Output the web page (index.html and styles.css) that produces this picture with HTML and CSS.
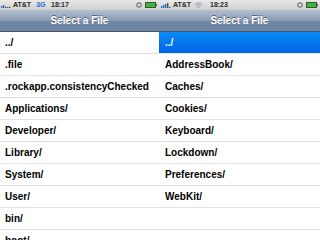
FILE: index.html
```html
<!DOCTYPE html>
<html>
<head>
<meta charset="utf-8">
<link rel="stylesheet" href="styles.css">
</head>
<body>
<div class="screens">
  <section class="phone left">
    <div class="status">
      <div class="carrier">
        <svg class="signal" width="10" height="6" viewBox="0 0 10 6"><rect x="0" y="4" width="1.4" height="2" fill="#1f6fd0"/><rect x="2" y="3" width="1.4" height="3" fill="#1f6fd0"/><rect x="4" y="4.8" width="1.4" height="1.2" fill="#555"/><rect x="6" y="4.8" width="1.4" height="1.2" fill="#555"/><rect x="8" y="4.8" width="1.4" height="1.2" fill="#555"/></svg>
        <span class="att">AT&amp;T</span>
        <span class="net">3G</span>
      </div>
      <span class="time">18:17</span>
      <div class="sys">
        <svg width="6" height="6" viewBox="0 0 6 6"><circle cx="3" cy="3" r="2.2" fill="none" stroke="#777" stroke-width="1.2"/></svg>
        <svg width="12" height="6" viewBox="0 0 12 6"><rect x="0.5" y="0.5" width="10" height="5" fill="#2fbf2f" stroke="#4a4a4a" stroke-width="1"/><rect x="10.5" y="1.8" width="1.3" height="2.4" fill="#4a4a4a"/></svg>
      </div>
    </div>
    <div class="nav">Select a File</div>
    <ul class="list">
      <li>../</li>
      <li>.file</li>
      <li>.rockapp.consistencyChecked</li>
      <li>Applications/</li>
      <li>Developer/</li>
      <li>Library/</li>
      <li>System/</li>
      <li>User/</li>
      <li>bin/</li>
      <li>boot/</li>
    </ul>
  </section>
  <section class="phone right">
    <div class="status">
      <div class="carrier">
        <svg class="signal" width="10" height="6" viewBox="0 0 10 6"><rect x="0" y="4" width="1.4" height="2" fill="#1f6fd0"/><rect x="2" y="3" width="1.4" height="3" fill="#1f6fd0"/><rect x="4" y="2" width="1.4" height="4" fill="#1f6fd0"/><rect x="6" y="1" width="1.4" height="5" fill="#555"/><rect x="8" y="4.8" width="1.4" height="1.2" fill="#555"/></svg>
        <span class="att">AT&amp;T</span>
        <svg class="wifi" width="9" height="7" viewBox="0 0 9 7"><path d="M0.6 2.6 A5.5 5.5 0 0 1 8.4 2.6" fill="none" stroke="#8a99b0" stroke-width="1"/><path d="M2 4 A3.5 3.5 0 0 1 7 4" fill="none" stroke="#8a99b0" stroke-width="1"/><path d="M3.4 5.4 A1.6 1.6 0 0 1 5.6 5.4" fill="none" stroke="#8a99b0" stroke-width="1"/></svg>
      </div>
      <span class="time">18:23</span>
      <div class="sys">
        <svg width="6" height="6" viewBox="0 0 6 6"><circle cx="3" cy="3" r="2.2" fill="none" stroke="#777" stroke-width="1.2"/></svg>
        <svg width="12" height="6" viewBox="0 0 12 6"><rect x="0.5" y="0.5" width="10" height="5" fill="#2fbf2f" stroke="#4a4a4a" stroke-width="1"/><rect x="10.5" y="1.8" width="1.3" height="2.4" fill="#4a4a4a"/></svg>
      </div>
    </div>
    <div class="nav">Select a File</div>
    <ul class="list">
      <li class="sel">../</li>
      <li>AddressBook/</li>
      <li>Caches/</li>
      <li>Cookies/</li>
      <li>Keyboard/</li>
      <li>Lockdown/</li>
      <li>Preferences/</li>
      <li>WebKit/</li>
      <li></li>
      <li></li>
    </ul>
  </section>
</div>
</body>
</html>
```
FILE: styles.css
```css
html, body {
  margin: 0;
  padding: 0;
  width: 320px;
  height: 240px;
  overflow: hidden;
  background: #fff;
  font-family: "Liberation Sans", Arial, sans-serif;
}
.screens {
  display: grid;
  grid-template-columns: 159px 161px;
  width: 320px;
  height: 240px;
  overflow: hidden;
}
.phone {
  display: flex;
  flex-direction: column;
  overflow: hidden;
}
.status {
  height: 10px;
  display: flex;
  align-items: center;
  background: linear-gradient(#e9e9e9, #cfcfcf);
  font-size: 7px;
  font-weight: bold;
  color: #2a2a2a;
  line-height: 10px;
}
.carrier {
  display: flex;
  align-items: center;
  width: 50px;
  padding-left: 1px;
  box-sizing: border-box;
}
.right .carrier {
  padding-left: 2px;
}
.signal {
  margin-right: 2px;
}
.net {
  margin-left: 5px;
  color: #2470d4;
}
.wifi {
  margin-left: 3px;
}
.time {
  margin-left: 1px;
}
.right .time {
  margin-left: 1px;
}
.sys {
  margin-left: auto;
  display: flex;
  align-items: center;
  gap: 3px;
  padding-right: 2px;
}
.right .sys {
  padding-right: 2px;
}
.nav {
  height: 21px;
  border-bottom: 1px solid #4a5566;
  background: linear-gradient(#b3bfcf, #8a9db6 50%, #7087a5 51%, #6d84a2);
  color: #fff;
  font-weight: bold;
  font-size: 10px;
  text-align: center;
  line-height: 21px;
  text-shadow: 0 -1px 0 rgba(0,0,0,0.45);
}
.list {
  list-style: none;
  margin: 0;
  padding: 0;
}
.list li {
  height: 21px;
  line-height: 21px;
  border-bottom: 1px solid #e2e2e2;
  padding-left: 5px;
  font-size: 10px;
  font-weight: bold;
  color: #000;
  white-space: nowrap;
}
.right .list li {
  padding-left: 6px;
}
.list li.sel {
  background: linear-gradient(#0a8cf5, #0163e6);
  color: #fff;
}
```
